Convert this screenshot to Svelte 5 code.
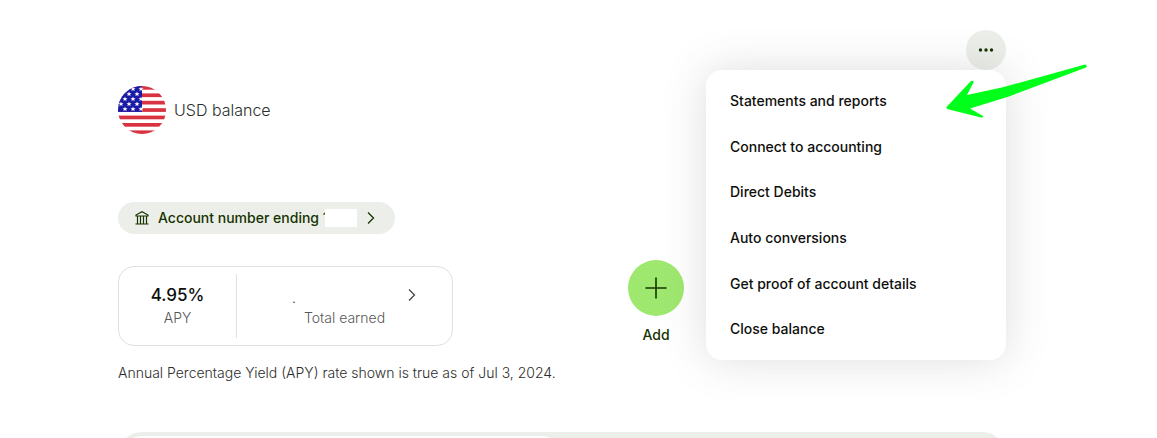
<script lang="ts">
    let menuOpen = $state(true);

    const menuItems = [
        "Statements and reports",
        "Connect to accounting",
        "Direct Debits",
        "Auto conversions",
        "Get proof of account details",
        "Close balance",
    ];

    // star rows of the flag, staggered on every other line
    const stars: { x: number; y: number }[] = [];
    for (let row = 0; row < 5; row++) {
        for (let x = row % 2 ? 3 : 7; x < 24; x += 8) stars.push({ x, y: 3 + row * 5 });
    }
</script>

<main class="page">
    <div class="top-bar">
        <button
            class="more-button"
            aria-label="More options"
            aria-expanded={menuOpen}
            onclick={() => (menuOpen = !menuOpen)}
        >
            <svg width="18" height="6" viewBox="0 0 18 6" fill="#163300">
                <circle cx="3.500" cy="3" r="1.700" />
                <circle cx="9" cy="3" r="1.700" />
                <circle cx="14.500" cy="3" r="1.700" />
            </svg>
        </button>
        {#if menuOpen}
            <div class="menu">
                {#each menuItems as item}
                    <button class="menu-item">{item}</button>
                {/each}
                <svg class="arrow" width="150" height="60" viewBox="0 0 150 60">
                    <path
                        d="M6.500 47 L31 21 Q34 20 33.500 22.500 L27 35 L64 27 L145 4.500 Q148 5 146 7.500 L69 36.500 L30 48.500 L43 56 Q44 58 41 57.500 L7 49 Z"
                        fill="#00ff1a"
                    />
                </svg>
            </div>
        {/if}
    </div>

    <header class="balance">
        <svg class="flag" width="48" height="48" viewBox="0 0 48 48">
            <clipPath id="flagClip"><circle cx="24" cy="24" r="24" /></clipPath>
            <g clip-path="url(#flagClip)">
                <rect width="48" height="48" fill="#fff" />
                {#each [0, 1, 2, 3, 4, 5, 6] as stripe}
                    <rect y={stripe * 7.4} width="48" height="3.7" fill="#d93240" />
                {/each}
                <rect width="24" height="25.900" fill="#1a1aa6" />
                {#each stars as star}
                    <path
                        transform="translate({star.x} {star.y})"
                        d="M0 -2.500 L.7 -.8 L2.500 -.8 L1.100 .4 L1.600 2.200 L0 1.100 L-1.600 2.200 L-1.100 .4 L-2.500 -.8 L-.7 -.8 Z"
                        fill="#fff"
                    />
                {/each}
            </g>
        </svg>
        <span class="balance-name">USD balance</span>
    </header>

    <div class="summary">
        <div class="details">
            <button class="account-pill">
                <svg width="14" height="14" viewBox="0 0 14 14" fill="none" stroke="#163300" stroke-width="1.200">
                    <path d="M1 5 V4 L7 .8 L13 4 V5 Z M.5 13 H13.500 M2.500 5 V13 M5.500 5 V13 M8.500 5 V13 M11.500 5 V13" />
                </svg>
                <span class="account-text">Account number ending 1</span>
                <span class="redacted"></span>
                <svg class="pill-chevron" width="8" height="14" viewBox="0 0 8 14" fill="none" stroke="#163300" stroke-width="1.300">
                    <path d="M1 1.500 L6.500 7 L1 12.500" />
                </svg>
            </button>

            <div class="earnings">
                <div class="rate">
                    <strong class="rate-value">4.95%</strong>
                    <span class="caption">APY</span>
                </div>
                <button class="earned">
                    <span class="earned-row">
                        <span class="amount">.</span>
                        <svg width="8" height="14" viewBox="0 0 8 14" fill="none" stroke="#454745" stroke-width="1.300">
                            <path d="M1 1.500 L6.500 7 L1 12.500" />
                        </svg>
                    </span>
                    <span class="caption">Total earned</span>
                </button>
            </div>
        </div>

        <button class="add">
            <span class="add-circle">
                <svg width="22" height="22" viewBox="0 0 22 22" stroke="#163300" stroke-width="1.600">
                    <path d="M11 .5 V21.500 M.5 11 H21.500" />
                </svg>
            </span>
            <span>Add</span>
        </button>
    </div>

    <p class="note">Annual Percentage Yield (APY) rate shown is true as of Jul 3, 2024.</p>

    <div class="tabs">
        <div class="tab"></div>
    </div>
</main>

<style>
    :global(body) {
        background: #fff;
    }

    .page {
        box-sizing: border-box;
        height: 100vh;
        overflow: hidden;
        padding: 30px 151px 0 118px;
        font-family: Inter, "Liberation Sans", sans-serif;
        font-size: 14px;
        font-weight: 300;
        line-height: 22px;
        color: #2c2e2c;
    }

    button {
        font: inherit;
        color: inherit;
        border: none;
        padding: 0;
        background: none;
        cursor: pointer;
    }

    svg {
        display: block;
        flex-shrink: 0;
    }

    .top-bar {
        position: relative;
        display: flex;
        justify-content: flex-end;
    }

    .more-button {
        display: grid;
        place-items: center;
        width: 40px;
        height: 40px;
        border-radius: 50%;
        background: #ecefe9;
    }

    .menu {
        position: absolute;
        z-index: 2;
        top: 100%;
        right: 0;
        box-sizing: border-box;
        display: flex;
        flex-direction: column;
        width: 300px;
        height: 290px;
        padding: 8px 0;
        border-radius: 16px;
        background: #fff;
        box-shadow: 0 0 44px rgba(69, 71, 69, 0.18);
    }

    .menu-item {
        flex: 1;
        padding: 0 24px;
        text-align: left;
        font-weight: 500;
        color: #0e0f0c;
    }

    .arrow {
        position: absolute;
        top: -10px;
        right: -84px;
        pointer-events: none;
    }

    .balance {
        display: flex;
        align-items: center;
        gap: 8px;
        margin-top: 16px;
    }

    .balance-name {
        font-size: 16px;
    }

    .summary {
        display: flex;
        justify-content: space-between;
        align-items: flex-end;
        margin-top: 68px;
        padding-right: 322px;
    }

    .details {
        display: flex;
        flex-direction: column;
        align-items: flex-start;
        gap: 32px;
    }

    .account-pill {
        display: flex;
        align-items: center;
        height: 32px;
        padding: 0 20px 0 17px;
        border-radius: 16px;
        background: #ecefe9;
        font-weight: 500;
        color: #163300;
    }

    .account-text {
        margin-left: 9px;
    }

    .redacted {
        width: 32px;
        height: 18px;
        margin: 0 10px 0 -4px;
        background: #fff;
        z-index: 1;
    }

    .earnings {
        box-sizing: border-box;
        display: flex;
        width: 335px;
        height: 80px;
        border: 1px solid #dfe1de;
        border-radius: 16px;
        padding: 7px 0;
    }

    .rate,
    .earned {
        box-sizing: border-box;
        display: flex;
        flex-direction: column;
        align-items: center;
        padding-top: 9px;
    }

    .rate {
        width: 118px;
        border-right: 1px solid #dfe1de;
    }

    .rate-value {
        font-size: 17px;
        line-height: 24px;
        font-weight: 500;
        color: #0e0f0c;
    }

    .caption {
        color: #565856;
    }

    .earned {
        flex: 1;
    }

    .earned-row {
        box-sizing: border-box;
        display: flex;
        align-items: center;
        justify-content: space-between;
        width: 100%;
        height: 24px;
        padding: 0 36px 0 55px;
    }

    .amount {
        align-self: flex-end;
        line-height: 18px;
    }

    .add {
        display: flex;
        flex-direction: column;
        align-items: center;
        gap: 8px;
        font-weight: 500;
        color: #163300;
    }

    .add-circle {
        display: grid;
        place-items: center;
        width: 56px;
        height: 56px;
        border-radius: 50%;
        background: #9fe870;
    }

    .note {
        margin: 16px 0 0;
    }

    .tabs {
        box-sizing: border-box;
        height: 48px;
        margin-top: 48px;
        padding: 4px;
        border-radius: 24px;
        background: #ecefe9;
    }

    .tab {
        width: 50%;
        height: 40px;
        border-radius: 20px;
        background: #fff;
    }
</style>
